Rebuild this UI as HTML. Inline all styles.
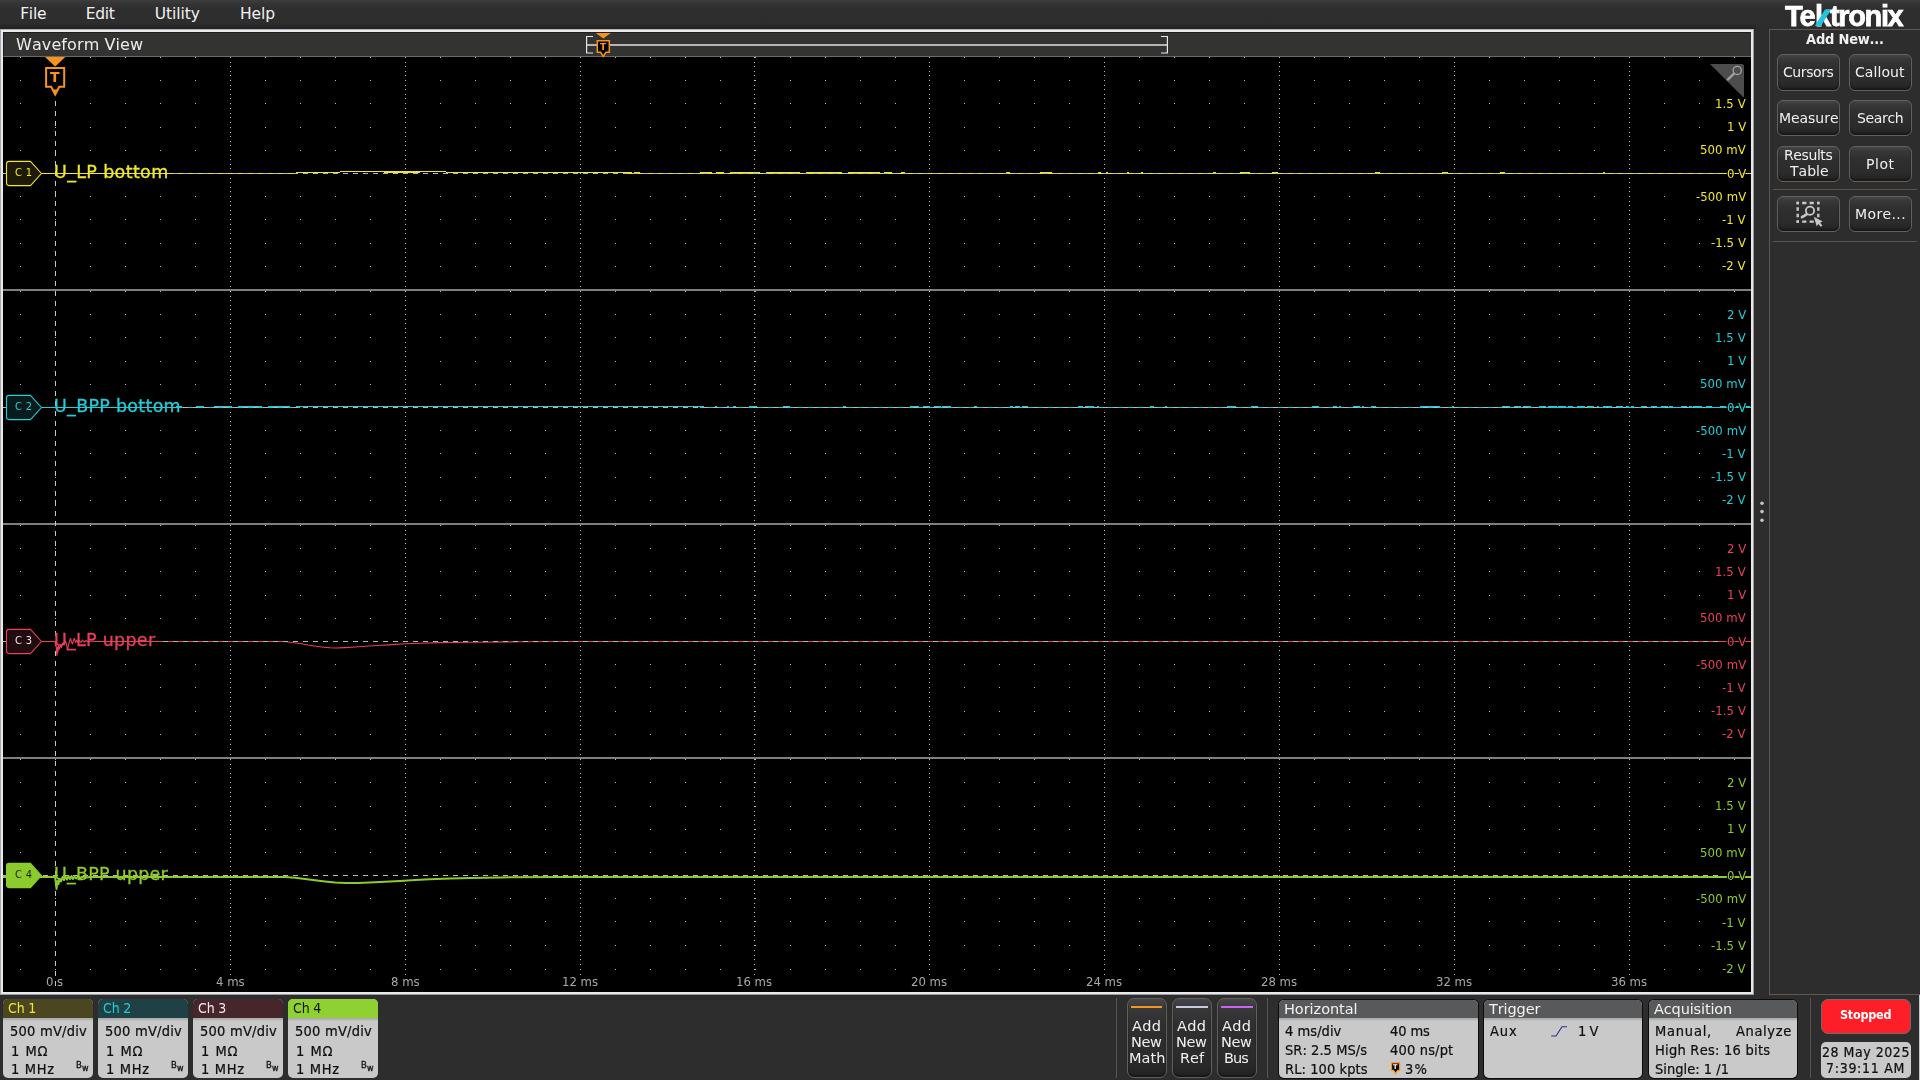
<!DOCTYPE html><html lang="en"><head><meta charset="utf-8"><title>Tektronix Waveform View</title><style>
*{box-sizing:border-box}
html,body{margin:0;padding:0}
body{width:1920px;height:1080px;overflow:hidden;background:#2d2d2d;position:relative;font-family:"DejaVu Sans Condensed","DejaVu Sans","Liberation Sans",sans-serif;color:#fff}
.t{position:absolute;white-space:nowrap;line-height:1;display:block;will-change:transform;font-kerning:none;font-variant-ligatures:none}
.lcd{will-change:auto}
.fc{font-family:"DejaVu Sans Condensed","DejaVu Sans","Liberation Sans",sans-serif;font-weight:400;font-stretch:condensed}
.fcb{font-family:"DejaVu Sans Condensed","DejaVu Sans","Liberation Sans",sans-serif;font-weight:700;font-stretch:condensed}
.fn{font-family:"DejaVu Sans","Liberation Sans",sans-serif;font-weight:400}
.fnb{font-family:"DejaVu Sans","Liberation Sans",sans-serif;font-weight:700}
.flb{font-family:"Liberation Sans","DejaVu Sans",sans-serif;font-weight:700}
.abs{position:absolute}
#menubar{left:0;top:0;width:1920px;height:29px;background:linear-gradient(#3d3d3d 0,#343434 4px,#2e2e2e 9px,#2d2d2d 29px)}
#mshadow{left:0;top:23px;width:1756px;height:6px;background:linear-gradient(rgba(0,0,0,0),rgba(0,0,0,.28))}
#wv{left:0;top:29px;width:1754px;height:966px;background:#e9e9ec;border-left:1px solid #a9a9ad;border-top:1px solid #b4b4b8;border-right:1px solid #9a9a9e;border-bottom:1px solid #9a9a9e}
#wvtitle{left:3px;top:32px;width:1748px;height:25px;background:#333331;border-top:1px solid #1e1e1e;border-left:1px solid #1e1e1e;border-bottom:1px solid #6a6a6a}
#grat{left:3px;top:57px;width:1748px;height:935px;background:#000}
#svg{left:0;top:0}
#rpanel{left:1769px;top:29px;width:160px;height:966px;border:1px solid #5f5751;background:#2d2d2d}
.btn{position:absolute;border:1px solid #665e58;border-radius:6px;background:linear-gradient(#444547 0,#38383a 12%,#2f2f30 35%,#2b2b2c 75%,#232324 100%);box-shadow:inset 0 -2px 2px rgba(0,0,0,.35)}
.sep{position:absolute;background:#5a534e}
.badge{position:absolute;border-radius:5px;overflow:hidden;background:#c9c9c9}
.badge .hd{position:absolute;left:0;top:0;right:0;height:19px}
.badge .sh{position:absolute;left:0;right:0;top:19px;height:3px;background:linear-gradient(#a9a9a9,#b6b6b6 60%,#c9c9c9)}
</style></head><body>
<div id="menubar" class="abs"></div><div id="mshadow" class="abs"></div>
<span class="t lcd fn" style="left:20.20px;top:6.90px;font-size:15.5px;color:#f2f2f2;letter-spacing:-0.241px;">File</span>
<span class="t lcd fn" style="left:85.80px;top:6.90px;font-size:15.5px;color:#f2f2f2;letter-spacing:-0.344px;">Edit</span>
<span class="t lcd fn" style="left:154.80px;top:6.90px;font-size:15.5px;color:#f2f2f2;letter-spacing:-0.068px;">Utility</span>
<span class="t lcd fn" style="left:240.00px;top:6.90px;font-size:15.5px;color:#f2f2f2;letter-spacing:-0.113px;">Help</span>
<div class="abs" id="logo" title="Tektronix" style="left:1780px;top:0;width:130px;height:29px"><span class="t flb" style="left:5.10px;top:1.70px;font-size:29px;color:#fff;letter-spacing:-3.282px;-webkit-text-stroke:0.75px #fff;">Te</span><span class="t flb" style="left:34.70px;top:1.70px;font-size:29px;color:#fff;-webkit-text-stroke:0.75px #fff;">k</span><span class="t flb" style="left:49.50px;top:1.70px;font-size:29px;color:#fff;letter-spacing:-1.369px;-webkit-text-stroke:0.75px #fff;">tronix</span>
<svg class="abs" style="left:30px;top:0" width="30" height="29" viewBox="1810 0 30 29"><polygon points="1814.8,25.9 1820.9,25.9 1831,9.6 1825,9.6" fill="#1fc3e3"/></svg>
</div>
<div id="wv" class="abs"></div><div id="wvtitle" class="abs"></div><div id="grat" class="abs"></div>
<span class="t fn" style="left:16.00px;top:37.00px;font-size:16px;color:#ececec;letter-spacing:0.102px;">Waveform View</span>
<svg id="svg" class="abs" width="1920" height="1080" viewBox="0 0 1920 1080">
<defs><clipPath id="gc"><rect x="3" y="57" width="1748" height="935"/></clipPath></defs>
<g clip-path="url(#gc)">
<g stroke="#bdbdbd" stroke-width="1" shape-rendering="crispEdges" stroke-dasharray="1 33.980">
<line x1="20.00" y1="57.5" x2="1751" y2="57.5"/>
<line x1="20.00" y1="80.5" x2="1751" y2="80.5"/>
<line x1="20.00" y1="103.5" x2="1751" y2="103.5"/>
<line x1="20.00" y1="127.5" x2="1751" y2="127.5"/>
<line x1="20.00" y1="150.5" x2="1751" y2="150.5"/>
<line x1="20.00" y1="196.5" x2="1751" y2="196.5"/>
<line x1="20.00" y1="219.5" x2="1751" y2="219.5"/>
<line x1="20.00" y1="243.5" x2="1751" y2="243.5"/>
<line x1="20.00" y1="266.5" x2="1751" y2="266.5"/>
<line x1="20.00" y1="291.5" x2="1751" y2="291.5"/>
<line x1="20.00" y1="314.5" x2="1751" y2="314.5"/>
<line x1="20.00" y1="337.5" x2="1751" y2="337.5"/>
<line x1="20.00" y1="361.5" x2="1751" y2="361.5"/>
<line x1="20.00" y1="384.5" x2="1751" y2="384.5"/>
<line x1="20.00" y1="430.5" x2="1751" y2="430.5"/>
<line x1="20.00" y1="453.5" x2="1751" y2="453.5"/>
<line x1="20.00" y1="477.5" x2="1751" y2="477.5"/>
<line x1="20.00" y1="500.5" x2="1751" y2="500.5"/>
<line x1="20.00" y1="525.5" x2="1751" y2="525.5"/>
<line x1="20.00" y1="548.5" x2="1751" y2="548.5"/>
<line x1="20.00" y1="571.5" x2="1751" y2="571.5"/>
<line x1="20.00" y1="595.5" x2="1751" y2="595.5"/>
<line x1="20.00" y1="618.5" x2="1751" y2="618.5"/>
<line x1="20.00" y1="664.5" x2="1751" y2="664.5"/>
<line x1="20.00" y1="687.5" x2="1751" y2="687.5"/>
<line x1="20.00" y1="711.5" x2="1751" y2="711.5"/>
<line x1="20.00" y1="734.5" x2="1751" y2="734.5"/>
<line x1="20.00" y1="759.5" x2="1751" y2="759.5"/>
<line x1="20.00" y1="782.5" x2="1751" y2="782.5"/>
<line x1="20.00" y1="806.5" x2="1751" y2="806.5"/>
<line x1="20.00" y1="829.5" x2="1751" y2="829.5"/>
<line x1="20.00" y1="852.5" x2="1751" y2="852.5"/>
<line x1="20.00" y1="898.5" x2="1751" y2="898.5"/>
<line x1="20.00" y1="921.5" x2="1751" y2="921.5"/>
<line x1="20.00" y1="945.5" x2="1751" y2="945.5"/>
<line x1="20.00" y1="969.5" x2="1751" y2="969.5"/>
</g>
<defs><path id="vd" d="M.5,57v1M.5,62v1M.5,66v1M.5,71v1M.5,75v1M.5,80v1M.5,85v1M.5,89v1M.5,94v1M.5,98v1M.5,103v1M.5,108v1M.5,113v1M.5,117v1M.5,122v1M.5,127v1M.5,132v1M.5,136v1M.5,141v1M.5,145v1M.5,150v1M.5,155v1M.5,159v1M.5,164v1M.5,168v1M.5,173v1M.5,178v1M.5,182v1M.5,187v1M.5,191v1M.5,196v1M.5,201v1M.5,205v1M.5,210v1M.5,214v1M.5,219v1M.5,224v1M.5,229v1M.5,233v1M.5,238v1M.5,243v1M.5,248v1M.5,252v1M.5,257v1M.5,261v1M.5,266v1M.5,271v1M.5,276v1M.5,281v1M.5,286v1M.5,291v1M.5,296v1M.5,300v1M.5,305v1M.5,309v1M.5,314v1M.5,319v1M.5,323v1M.5,328v1M.5,332v1M.5,337v1M.5,342v1M.5,347v1M.5,351v1M.5,356v1M.5,361v1M.5,366v1M.5,370v1M.5,375v1M.5,379v1M.5,384v1M.5,389v1M.5,393v1M.5,398v1M.5,402v1M.5,407v1M.5,412v1M.5,416v1M.5,421v1M.5,425v1M.5,430v1M.5,435v1M.5,439v1M.5,444v1M.5,448v1M.5,453v1M.5,458v1M.5,463v1M.5,467v1M.5,472v1M.5,477v1M.5,482v1M.5,486v1M.5,491v1M.5,495v1M.5,500v1M.5,505v1M.5,510v1M.5,515v1M.5,520v1M.5,525v1M.5,530v1M.5,534v1M.5,539v1M.5,543v1M.5,548v1M.5,553v1M.5,557v1M.5,562v1M.5,566v1M.5,571v1M.5,576v1M.5,581v1M.5,585v1M.5,590v1M.5,595v1M.5,600v1M.5,604v1M.5,609v1M.5,613v1M.5,618v1M.5,623v1M.5,627v1M.5,632v1M.5,636v1M.5,641v1M.5,646v1M.5,650v1M.5,655v1M.5,659v1M.5,664v1M.5,669v1M.5,673v1M.5,678v1M.5,682v1M.5,687v1M.5,692v1M.5,697v1M.5,701v1M.5,706v1M.5,711v1M.5,716v1M.5,720v1M.5,725v1M.5,729v1M.5,734v1M.5,739v1M.5,744v1M.5,749v1M.5,754v1M.5,759v1M.5,764v1M.5,768v1M.5,773v1M.5,777v1M.5,782v1M.5,787v1M.5,792v1M.5,796v1M.5,801v1M.5,806v1M.5,811v1M.5,815v1M.5,820v1M.5,824v1M.5,829v1M.5,834v1M.5,838v1M.5,843v1M.5,847v1M.5,852v1M.5,857v1M.5,861v1M.5,866v1M.5,870v1M.5,875v1M.5,880v1M.5,884v1M.5,889v1M.5,893v1M.5,898v1M.5,903v1M.5,907v1M.5,912v1M.5,916v1M.5,921v1M.5,926v1M.5,931v1M.5,935v1M.5,940v1M.5,945v1M.5,950v1M.5,955v1M.5,959v1M.5,964v1M.5,969v1M.5,974v1" stroke="#bdbdbd" stroke-width="1" shape-rendering="crispEdges" fill="none"/></defs>
<use href="#vd" x="230"/>
<use href="#vd" x="405"/>
<use href="#vd" x="580"/>
<use href="#vd" x="754"/>
<use href="#vd" x="929"/>
<use href="#vd" x="1104"/>
<use href="#vd" x="1279"/>
<use href="#vd" x="1454"/>
<use href="#vd" x="1629"/>
<rect x="3" y="289" width="1748" height="2" fill="#7f7f7f"/>
<rect x="3" y="523" width="1748" height="2" fill="#7f7f7f"/>
<rect x="3" y="757" width="1748" height="2" fill="#7f7f7f"/>
<line x1="55.5" y1="101" x2="55.5" y2="991" stroke="#c8c8c8" stroke-width="1" stroke-dasharray="5 5" shape-rendering="crispEdges"/>
</g>
<g clip-path="url(#gc)" fill="none" shape-rendering="crispEdges">
<line x1="3" y1="173.5" x2="298" y2="173.5" stroke="#f0e62e" stroke-width="1"/><line x1="296" y1="172.5" x2="340" y2="172.5" stroke="#f0e62e" stroke-width="1"/><line x1="340" y1="171.5" x2="446" y2="171.5" stroke="#f0e62e" stroke-width="1"/><line x1="384" y1="172.5" x2="420" y2="172.5" stroke="#f0e62e" stroke-width="1"/><line x1="446" y1="172.5" x2="632" y2="172.5" stroke="#f0e62e" stroke-width="1"/><line x1="628" y1="173.5" x2="1751" y2="173.5" stroke="#f0e62e" stroke-width="1"/><line x1="300" y1="172.5" x2="308" y2="172.5" stroke="#f0e62e" stroke-width="1"/><line x1="318" y1="172.5" x2="322" y2="172.5" stroke="#f0e62e" stroke-width="1"/><line x1="452" y1="172.5" x2="462" y2="172.5" stroke="#f0e62e" stroke-width="1"/><line x1="466" y1="172.5" x2="470" y2="172.5" stroke="#f0e62e" stroke-width="1"/><line x1="476" y1="172.5" x2="486" y2="172.5" stroke="#f0e62e" stroke-width="1"/><line x1="634" y1="172.5" x2="640" y2="172.5" stroke="#f0e62e" stroke-width="1"/><line x1="700" y1="172.5" x2="712" y2="172.5" stroke="#f0e62e" stroke-width="1"/><line x1="716" y1="172.5" x2="724" y2="172.5" stroke="#f0e62e" stroke-width="1"/><line x1="730" y1="172.5" x2="760" y2="172.5" stroke="#f0e62e" stroke-width="1"/><line x1="766" y1="172.5" x2="800" y2="172.5" stroke="#f0e62e" stroke-width="1"/><line x1="806" y1="172.5" x2="842" y2="172.5" stroke="#f0e62e" stroke-width="1"/><line x1="848" y1="172.5" x2="880" y2="172.5" stroke="#f0e62e" stroke-width="1"/><line x1="884" y1="172.5" x2="892" y2="172.5" stroke="#f0e62e" stroke-width="1"/><line x1="1040" y1="172.5" x2="1052" y2="172.5" stroke="#f0e62e" stroke-width="1"/><line x1="1240" y1="172.5" x2="1250" y2="172.5" stroke="#f0e62e" stroke-width="1"/><line x1="901" y1="172.5" x2="905" y2="172.5" stroke="#f0e62e" stroke-width="1"/><line x1="1006" y1="172.5" x2="1010" y2="172.5" stroke="#f0e62e" stroke-width="1"/><line x1="1047" y1="172.5" x2="1051" y2="172.5" stroke="#f0e62e" stroke-width="1"/><line x1="1098" y1="172.5" x2="1101" y2="172.5" stroke="#f0e62e" stroke-width="1"/><line x1="1106" y1="172.5" x2="1108" y2="172.5" stroke="#f0e62e" stroke-width="1"/><line x1="1127" y1="172.5" x2="1129" y2="172.5" stroke="#f0e62e" stroke-width="1"/><line x1="1141" y1="172.5" x2="1143" y2="172.5" stroke="#f0e62e" stroke-width="1"/><line x1="1213" y1="172.5" x2="1216" y2="172.5" stroke="#f0e62e" stroke-width="1"/><line x1="1272" y1="172.5" x2="1278" y2="172.5" stroke="#f0e62e" stroke-width="1"/><line x1="1375" y1="172.5" x2="1380" y2="172.5" stroke="#f0e62e" stroke-width="1"/><line x1="1442" y1="172.5" x2="1448" y2="172.5" stroke="#f0e62e" stroke-width="1"/><line x1="1500" y1="172.5" x2="1505" y2="172.5" stroke="#f0e62e" stroke-width="1"/><line x1="1603" y1="172.5" x2="1605" y2="172.5" stroke="#f0e62e" stroke-width="1"/>
<line x1="3" y1="407.5" x2="300" y2="407.5" stroke="#22cdd6" stroke-width="1"/><line x1="296" y1="406.5" x2="704" y2="406.5" stroke="#22cdd6" stroke-width="1"/><line x1="700" y1="407.5" x2="1751" y2="407.5" stroke="#22cdd6" stroke-width="1"/><line x1="715" y1="406.5" x2="717" y2="406.5" stroke="#22cdd6" stroke-width="1"/><line x1="727" y1="406.5" x2="729" y2="406.5" stroke="#22cdd6" stroke-width="1"/><line x1="733" y1="406.5" x2="736" y2="406.5" stroke="#22cdd6" stroke-width="1"/><line x1="749" y1="406.5" x2="757" y2="406.5" stroke="#22cdd6" stroke-width="1"/><line x1="783" y1="406.5" x2="790" y2="406.5" stroke="#22cdd6" stroke-width="1"/><line x1="843" y1="406.5" x2="846" y2="406.5" stroke="#22cdd6" stroke-width="1"/><line x1="910" y1="406.5" x2="919" y2="406.5" stroke="#22cdd6" stroke-width="1"/><line x1="923" y1="406.5" x2="930" y2="406.5" stroke="#22cdd6" stroke-width="1"/><line x1="934" y1="406.5" x2="941" y2="406.5" stroke="#22cdd6" stroke-width="1"/><line x1="942" y1="406.5" x2="951" y2="406.5" stroke="#22cdd6" stroke-width="1"/><line x1="974" y1="406.5" x2="977" y2="406.5" stroke="#22cdd6" stroke-width="1"/><line x1="1010" y1="406.5" x2="1013" y2="406.5" stroke="#22cdd6" stroke-width="1"/><line x1="1015" y1="406.5" x2="1020" y2="406.5" stroke="#22cdd6" stroke-width="1"/><line x1="1022" y1="406.5" x2="1028" y2="406.5" stroke="#22cdd6" stroke-width="1"/><line x1="1078" y1="406.5" x2="1083" y2="406.5" stroke="#22cdd6" stroke-width="1"/><line x1="1085" y1="406.5" x2="1094" y2="406.5" stroke="#22cdd6" stroke-width="1"/><line x1="1097" y1="406.5" x2="1099" y2="406.5" stroke="#22cdd6" stroke-width="1"/><line x1="1150" y1="406.5" x2="1154" y2="406.5" stroke="#22cdd6" stroke-width="1"/><line x1="1165" y1="406.5" x2="1167" y2="406.5" stroke="#22cdd6" stroke-width="1"/><line x1="1227" y1="406.5" x2="1236" y2="406.5" stroke="#22cdd6" stroke-width="1"/><line x1="1251" y1="406.5" x2="1258" y2="406.5" stroke="#22cdd6" stroke-width="1"/><line x1="1312" y1="406.5" x2="1319" y2="406.5" stroke="#22cdd6" stroke-width="1"/><line x1="1333" y1="406.5" x2="1337" y2="406.5" stroke="#22cdd6" stroke-width="1"/><line x1="1339" y1="406.5" x2="1341" y2="406.5" stroke="#22cdd6" stroke-width="1"/><line x1="1353" y1="406.5" x2="1360" y2="406.5" stroke="#22cdd6" stroke-width="1"/><line x1="1362" y1="406.5" x2="1364" y2="406.5" stroke="#22cdd6" stroke-width="1"/><line x1="1371" y1="406.5" x2="1376" y2="406.5" stroke="#22cdd6" stroke-width="1"/><line x1="1428" y1="406.5" x2="1432" y2="406.5" stroke="#22cdd6" stroke-width="1"/><line x1="1452" y1="406.5" x2="1454" y2="406.5" stroke="#22cdd6" stroke-width="1"/><line x1="1502" y1="406.5" x2="1510" y2="406.5" stroke="#22cdd6" stroke-width="1"/><line x1="1514" y1="406.5" x2="1521" y2="406.5" stroke="#22cdd6" stroke-width="1"/><line x1="1523" y1="406.5" x2="1531" y2="406.5" stroke="#22cdd6" stroke-width="1"/><line x1="1539" y1="406.5" x2="1546" y2="406.5" stroke="#22cdd6" stroke-width="1"/><line x1="1548" y1="406.5" x2="1557" y2="406.5" stroke="#22cdd6" stroke-width="1"/><line x1="1558" y1="406.5" x2="1566" y2="406.5" stroke="#22cdd6" stroke-width="1"/><line x1="1568" y1="406.5" x2="1573" y2="406.5" stroke="#22cdd6" stroke-width="1"/><line x1="1577" y1="406.5" x2="1585" y2="406.5" stroke="#22cdd6" stroke-width="1"/><line x1="1587" y1="406.5" x2="1594" y2="406.5" stroke="#22cdd6" stroke-width="1"/><line x1="1597" y1="406.5" x2="1599" y2="406.5" stroke="#22cdd6" stroke-width="1"/><line x1="1603" y1="406.5" x2="1612" y2="406.5" stroke="#22cdd6" stroke-width="1"/><line x1="1616" y1="406.5" x2="1623" y2="406.5" stroke="#22cdd6" stroke-width="1"/><line x1="1626" y1="406.5" x2="1629" y2="406.5" stroke="#22cdd6" stroke-width="1"/><line x1="1631" y1="406.5" x2="1634" y2="406.5" stroke="#22cdd6" stroke-width="1"/><line x1="1641" y1="406.5" x2="1647" y2="406.5" stroke="#22cdd6" stroke-width="1"/><line x1="1651" y1="406.5" x2="1657" y2="406.5" stroke="#22cdd6" stroke-width="1"/><line x1="1661" y1="406.5" x2="1668" y2="406.5" stroke="#22cdd6" stroke-width="1"/><line x1="1669" y1="406.5" x2="1673" y2="406.5" stroke="#22cdd6" stroke-width="1"/><line x1="1681" y1="406.5" x2="1687" y2="406.5" stroke="#22cdd6" stroke-width="1"/><line x1="1689" y1="406.5" x2="1692" y2="406.5" stroke="#22cdd6" stroke-width="1"/><line x1="1693" y1="406.5" x2="1702" y2="406.5" stroke="#22cdd6" stroke-width="1"/><line x1="1706" y1="406.5" x2="1712" y2="406.5" stroke="#22cdd6" stroke-width="1"/><line x1="1720" y1="406.5" x2="1726" y2="406.5" stroke="#22cdd6" stroke-width="1"/><line x1="1728" y1="406.5" x2="1734" y2="406.5" stroke="#22cdd6" stroke-width="1"/><line x1="1736" y1="406.5" x2="1742" y2="406.5" stroke="#22cdd6" stroke-width="1"/><line x1="1744" y1="406.5" x2="1750" y2="406.5" stroke="#22cdd6" stroke-width="1"/><line x1="176" y1="406.5" x2="182" y2="406.5" stroke="#22cdd6" stroke-width="1"/><line x1="196" y1="406.5" x2="204" y2="406.5" stroke="#22cdd6" stroke-width="1"/><line x1="214" y1="406.5" x2="232" y2="406.5" stroke="#22cdd6" stroke-width="1"/><line x1="238" y1="406.5" x2="262" y2="406.5" stroke="#22cdd6" stroke-width="1"/><line x1="268" y1="406.5" x2="290" y2="406.5" stroke="#22cdd6" stroke-width="1"/><line x1="1420" y1="406.5" x2="1440" y2="406.5" stroke="#22cdd6" stroke-width="1"/>
</g>
<g clip-path="url(#gc)" fill="none" stroke-linejoin="round">
<polyline points="3.0,641.5 55.0,641.5 55.5,646.0 56.0,641.0 56.5,652.0 57.0,655.5 57.5,647.0 58.0,652.0 58.5,646.0 59.5,649.0 60.5,645.0 61.5,647.5 62.5,643.0 64.0,645.0 65.5,641.0 66.5,644.5 67.5,650.0 68.5,645.0 69.5,641.0 70.5,638.5 71.5,642.0 72.5,644.0 73.5,640.0 74.5,638.5 75.5,642.5 77.0,640.0 78.0,642.5 79.5,640.5 81.0,642.5 82.5,640.0 84.0,642.0 86.0,640.5 88.0,642.0 91.0,641.0 95.0,641.5 285.0,641.5 292.0,642.5 300.0,643.5 308.0,645.0 316.0,646.2 324.0,647.2 330.0,647.8 336.0,648.0 345.0,647.6 355.0,647.0 365.0,646.3 378.0,645.5 392.0,644.6 405.0,643.8 420.0,643.2 440.0,642.6 470.0,642.2 520.0,641.8 560.0,641.5 1751.0,641.5" stroke="#e8405a" stroke-width="1.1"/>
<polyline points="3.0,877.0 55.0,877.0 55.5,880.0 56.5,889.0 57.5,881.0 58.5,884.0 59.5,879.0 61.0,881.5 62.5,877.0 64.0,880.0 65.5,876.5 67.0,879.5 68.5,876.0 70.0,879.0 71.5,876.0 73.0,879.0 74.5,876.5 76.0,878.5 78.0,876.3 80.0,878.0 83.0,876.5 86.0,877.5 90.0,877.0 100.0,877.0 285.0,877.0 295.0,877.8 305.0,879.0 315.0,880.2 325.0,881.4 335.0,882.4 345.0,882.9 358.0,882.9 370.0,882.5 385.0,881.8 400.0,880.9 415.0,880.0 430.0,879.2 450.0,878.4 470.0,877.9 500.0,877.4 560.0,877.1 620.0,877.0 1751.0,877.0" stroke="#8ccb2c" stroke-width="2"/>
</g>
<g clip-path="url(#gc)" shape-rendering="crispEdges" stroke="#b9b9b9" stroke-width="1" stroke-dasharray="5 5">
<line x1="173" y1="173.5" x2="1718" y2="173.5"/>
<line x1="183" y1="407.5" x2="1718" y2="407.5"/>
<line x1="163" y1="641.5" x2="1718" y2="641.5"/>
<line x1="43" y1="875.5" x2="1718" y2="875.5"/>
</g>
<g clip-path="url(#gc)" shape-rendering="crispEdges"><line x1="1545" y1="407.5" x2="1552" y2="407.5" stroke="#22cdd6" stroke-width="1"/><line x1="1553" y1="407.5" x2="1559" y2="407.5" stroke="#22cdd6" stroke-width="1"/><line x1="1561" y1="407.5" x2="1571" y2="407.5" stroke="#22cdd6" stroke-width="1"/><line x1="1575" y1="407.5" x2="1585" y2="407.5" stroke="#22cdd6" stroke-width="1"/><line x1="1598" y1="407.5" x2="1606" y2="407.5" stroke="#22cdd6" stroke-width="1"/><line x1="1618" y1="407.5" x2="1623" y2="407.5" stroke="#22cdd6" stroke-width="1"/><line x1="1626" y1="407.5" x2="1635" y2="407.5" stroke="#22cdd6" stroke-width="1"/><line x1="1655" y1="407.5" x2="1665" y2="407.5" stroke="#22cdd6" stroke-width="1"/><line x1="1668" y1="407.5" x2="1678" y2="407.5" stroke="#22cdd6" stroke-width="1"/><line x1="1694" y1="407.5" x2="1702" y2="407.5" stroke="#22cdd6" stroke-width="1"/><line x1="1705" y1="407.5" x2="1711" y2="407.5" stroke="#22cdd6" stroke-width="1"/><line x1="1712" y1="407.5" x2="1720" y2="407.5" stroke="#22cdd6" stroke-width="1"/></g>
<rect x="3" y="173.0" width="4" height="1" fill="#b0b0b0"/>
<rect x="3" y="407.0" width="4" height="1" fill="#b0b0b0"/>
<rect x="3" y="641.0" width="4" height="1" fill="#b0b0b0"/>
<rect x="3" y="875.0" width="4" height="1" fill="#b0b0b0"/>
<path d="M9,161.4 H30.5 L41.5,173.5 L30.5,185.6 H9 Q6.5,185.6 6.5,183.1 V163.9 Q6.5,161.4 9,161.4 Z" fill="#1d1b08" stroke="#f0e62e" stroke-width="1.1" stroke-linejoin="round"/>
<path d="M9,395.4 H30.5 L41.5,407.5 L30.5,419.6 H9 Q6.5,419.6 6.5,417.1 V397.9 Q6.5,395.4 9,395.4 Z" fill="#081c1e" stroke="#22cdd6" stroke-width="1.1" stroke-linejoin="round"/>
<path d="M9,629.4 H30.5 L41.5,641.5 L30.5,653.6 H9 Q6.5,653.6 6.5,651.1 V631.9 Q6.5,629.4 9,629.4 Z" fill="#210c11" stroke="#e8405a" stroke-width="1.1" stroke-linejoin="round"/>
<path d="M9,863.4 H30.5 L41.5,875.5 L30.5,887.6 H9 Q6.5,887.6 6.5,885.1 V865.9 Q6.5,863.4 9,863.4 Z" fill="#8ccb2c" stroke="#8ccb2c" stroke-width="1.1" stroke-linejoin="round"/>
<polygon points="45,57 65.3,57 55.2,66.4" fill="#f7931e"/>
<path d="M46.1,68.1 H64.2 V86.8 H59.2 L55.2,94.5 L51.2,86.8 H46.1 Z" fill="#000" stroke="#f7931e" stroke-width="2"/><polygon points="52.6,89.5 57.8,89.5 55.2,94.5" fill="#f7931e"/>
<path d="M1710,64 H1742 Q1744,64 1744,66 V98 Z" fill="#4d4d4d"/>
<circle cx="1737.2" cy="70.4" r="4.1" fill="none" stroke="#a2a2a2" stroke-width="1.3"/><line x1="1734" y1="73.6" x2="1727.8" y2="79.6" stroke="#a2a2a2" stroke-width="2.2" stroke-linecap="round"/>
<line x1="587" y1="45" x2="1167" y2="45" stroke="#b4b4b4" stroke-width="2"/>
<path d="M593,36.5 H586.6 V53 H593 M1161,36.5 H1167.4 V53 H1161" fill="none" stroke="#e6e6e6" stroke-width="1.2"/>
<polygon points="595.8,33 610.8,33 603.3,38.4" fill="#f7931e"/>
<path d="M597.3,40.8 H609.3 V52.3 H606 L603.3,56.3 L600.6,52.3 H597.3 Z" fill="#000" stroke="#f7931e" stroke-width="1.5"/>
<circle cx="1762" cy="503.2" r="1.8" fill="#c4c4c4"/>
<circle cx="1762" cy="511.6" r="1.8" fill="#c4c4c4"/>
<circle cx="1762" cy="520.2" r="1.8" fill="#c4c4c4"/>
</svg>
<span class="t fnb" style="left:49.90px;top:70.40px;font-size:14px;color:#f7931e;">T</span>
<span class="t fnb" style="left:599.70px;top:42.70px;font-size:9px;color:#f7931e;">T</span>
<span class="t fc" style="left:14.50px;top:167.40px;font-size:11px;color:#f0e62e;letter-spacing:0.369px;">C 1</span>
<span class="t fn" style="left:53.90px;top:163.80px;font-size:17.5px;color:#f0e62e;letter-spacing:0.347px;-webkit-text-stroke:0.3px #f0e62e;">U_LP bottom</span>
<span class="t fc" style="left:14.50px;top:401.40px;font-size:11px;color:#22cdd6;letter-spacing:0.369px;">C 2</span>
<span class="t fn" style="left:53.90px;top:397.80px;font-size:17.5px;color:#22cdd6;letter-spacing:0.286px;-webkit-text-stroke:0.3px #22cdd6;">U_BPP bottom</span>
<span class="t fc" style="left:14.50px;top:635.40px;font-size:11px;color:#f6e2e6;letter-spacing:0.369px;">C 3</span>
<span class="t fn" style="left:53.90px;top:631.80px;font-size:17.5px;color:#e8405a;letter-spacing:0.267px;-webkit-text-stroke:0.3px #e8405a;">U_LP upper</span>
<span class="t fc" style="left:14.50px;top:869.40px;font-size:11px;color:#17260a;letter-spacing:0.369px;">C 4</span>
<span class="t fn" style="left:53.90px;top:865.80px;font-size:17.5px;color:#8ccb2c;letter-spacing:0.228px;-webkit-text-stroke:0.3px #8ccb2c;">U_BPP upper</span>
<span class="t fc" style="left:1715.19px;top:97.00px;font-size:13px;color:#f0e62e;letter-spacing:0.080px;background:#000;padding:0 1px 0 3px;margin-left:-3px;">1.5 V</span>
<span class="t fc" style="left:1726.50px;top:120.00px;font-size:13px;color:#f0e62e;letter-spacing:0.080px;background:#000;padding:0 1px 0 3px;margin-left:-3px;">1 V</span>
<span class="t fc" style="left:1699.96px;top:143.00px;font-size:13px;color:#f0e62e;letter-spacing:0.080px;background:#000;padding:0 1px 0 3px;margin-left:-3px;">500 mV</span>
<span class="t fc" style="left:1726.50px;top:167.00px;font-size:13px;color:#f0e62e;letter-spacing:0.080px;text-shadow:-1px 0 0 #000,1px 0 0 #000;">0 V</span>
<span class="t fc" style="left:1695.66px;top:190.00px;font-size:13px;color:#f0e62e;letter-spacing:0.080px;background:#000;padding:0 1px 0 3px;margin-left:-3px;">-500 mV</span>
<span class="t fc" style="left:1722.19px;top:213.00px;font-size:13px;color:#f0e62e;letter-spacing:0.080px;background:#000;padding:0 1px 0 3px;margin-left:-3px;">-1 V</span>
<span class="t fc" style="left:1710.88px;top:236.00px;font-size:13px;color:#f0e62e;letter-spacing:0.080px;background:#000;padding:0 1px 0 3px;margin-left:-3px;">-1.5 V</span>
<span class="t fc" style="left:1722.19px;top:259.00px;font-size:13px;color:#f0e62e;letter-spacing:0.080px;background:#000;padding:0 1px 0 3px;margin-left:-3px;">-2 V</span>
<span class="t fc" style="left:1726.50px;top:308.00px;font-size:13px;color:#22cdd6;letter-spacing:0.080px;background:#000;padding:0 1px 0 3px;margin-left:-3px;">2 V</span>
<span class="t fc" style="left:1715.19px;top:331.00px;font-size:13px;color:#22cdd6;letter-spacing:0.080px;background:#000;padding:0 1px 0 3px;margin-left:-3px;">1.5 V</span>
<span class="t fc" style="left:1726.50px;top:354.00px;font-size:13px;color:#22cdd6;letter-spacing:0.080px;background:#000;padding:0 1px 0 3px;margin-left:-3px;">1 V</span>
<span class="t fc" style="left:1699.96px;top:377.00px;font-size:13px;color:#22cdd6;letter-spacing:0.080px;background:#000;padding:0 1px 0 3px;margin-left:-3px;">500 mV</span>
<span class="t fc" style="left:1726.50px;top:401.00px;font-size:13px;color:#22cdd6;letter-spacing:0.080px;text-shadow:-1px 0 0 #000,1px 0 0 #000;">0 V</span>
<span class="t fc" style="left:1695.66px;top:424.00px;font-size:13px;color:#22cdd6;letter-spacing:0.080px;background:#000;padding:0 1px 0 3px;margin-left:-3px;">-500 mV</span>
<span class="t fc" style="left:1722.19px;top:447.00px;font-size:13px;color:#22cdd6;letter-spacing:0.080px;background:#000;padding:0 1px 0 3px;margin-left:-3px;">-1 V</span>
<span class="t fc" style="left:1710.88px;top:470.00px;font-size:13px;color:#22cdd6;letter-spacing:0.080px;background:#000;padding:0 1px 0 3px;margin-left:-3px;">-1.5 V</span>
<span class="t fc" style="left:1722.19px;top:493.00px;font-size:13px;color:#22cdd6;letter-spacing:0.080px;background:#000;padding:0 1px 0 3px;margin-left:-3px;">-2 V</span>
<span class="t fc" style="left:1726.50px;top:542.00px;font-size:13px;color:#e8405a;letter-spacing:0.080px;background:#000;padding:0 1px 0 3px;margin-left:-3px;">2 V</span>
<span class="t fc" style="left:1715.19px;top:565.00px;font-size:13px;color:#e8405a;letter-spacing:0.080px;background:#000;padding:0 1px 0 3px;margin-left:-3px;">1.5 V</span>
<span class="t fc" style="left:1726.50px;top:588.00px;font-size:13px;color:#e8405a;letter-spacing:0.080px;background:#000;padding:0 1px 0 3px;margin-left:-3px;">1 V</span>
<span class="t fc" style="left:1699.96px;top:611.00px;font-size:13px;color:#e8405a;letter-spacing:0.080px;background:#000;padding:0 1px 0 3px;margin-left:-3px;">500 mV</span>
<span class="t fc" style="left:1726.50px;top:635.00px;font-size:13px;color:#e8405a;letter-spacing:0.080px;text-shadow:-1px 0 0 #000,1px 0 0 #000;">0 V</span>
<span class="t fc" style="left:1695.66px;top:658.00px;font-size:13px;color:#e8405a;letter-spacing:0.080px;background:#000;padding:0 1px 0 3px;margin-left:-3px;">-500 mV</span>
<span class="t fc" style="left:1722.19px;top:681.00px;font-size:13px;color:#e8405a;letter-spacing:0.080px;background:#000;padding:0 1px 0 3px;margin-left:-3px;">-1 V</span>
<span class="t fc" style="left:1710.88px;top:704.00px;font-size:13px;color:#e8405a;letter-spacing:0.080px;background:#000;padding:0 1px 0 3px;margin-left:-3px;">-1.5 V</span>
<span class="t fc" style="left:1722.19px;top:727.00px;font-size:13px;color:#e8405a;letter-spacing:0.080px;background:#000;padding:0 1px 0 3px;margin-left:-3px;">-2 V</span>
<span class="t fc" style="left:1726.50px;top:776.00px;font-size:13px;color:#8ccb2c;letter-spacing:0.080px;background:#000;padding:0 1px 0 3px;margin-left:-3px;">2 V</span>
<span class="t fc" style="left:1715.19px;top:799.00px;font-size:13px;color:#8ccb2c;letter-spacing:0.080px;background:#000;padding:0 1px 0 3px;margin-left:-3px;">1.5 V</span>
<span class="t fc" style="left:1726.50px;top:822.00px;font-size:13px;color:#8ccb2c;letter-spacing:0.080px;background:#000;padding:0 1px 0 3px;margin-left:-3px;">1 V</span>
<span class="t fc" style="left:1699.96px;top:846.00px;font-size:13px;color:#8ccb2c;letter-spacing:0.080px;background:#000;padding:0 1px 0 3px;margin-left:-3px;">500 mV</span>
<span class="t fc" style="left:1726.50px;top:869.00px;font-size:13px;color:#8ccb2c;letter-spacing:0.080px;text-shadow:-1px 0 0 #000,1px 0 0 #000;">0 V</span>
<span class="t fc" style="left:1695.66px;top:892.00px;font-size:13px;color:#8ccb2c;letter-spacing:0.080px;background:#000;padding:0 1px 0 3px;margin-left:-3px;">-500 mV</span>
<span class="t fc" style="left:1722.19px;top:916.00px;font-size:13px;color:#8ccb2c;letter-spacing:0.080px;background:#000;padding:0 1px 0 3px;margin-left:-3px;">-1 V</span>
<span class="t fc" style="left:1710.88px;top:939.00px;font-size:13px;color:#8ccb2c;letter-spacing:0.080px;background:#000;padding:0 1px 0 3px;margin-left:-3px;">-1.5 V</span>
<span class="t fc" style="left:1722.19px;top:962.00px;font-size:13px;color:#8ccb2c;letter-spacing:0.080px;background:#000;padding:0 1px 0 3px;margin-left:-3px;">-2 V</span>
<span class="t fc" style="left:46.20px;top:974.80px;font-size:13px;color:#a8a8a8;letter-spacing:-0.079px;">0 s</span>
<span class="t fc" style="left:216.40px;top:974.80px;font-size:13px;color:#a8a8a8;letter-spacing:-0.011px;background:#000;">4 ms</span>
<span class="t fc" style="left:391.40px;top:974.80px;font-size:13px;color:#a8a8a8;letter-spacing:-0.011px;background:#000;">8 ms</span>
<span class="t fc" style="left:561.60px;top:974.80px;font-size:13px;color:#a8a8a8;letter-spacing:-0.019px;background:#000;">12 ms</span>
<span class="t fc" style="left:735.60px;top:974.80px;font-size:13px;color:#a8a8a8;letter-spacing:-0.019px;background:#000;">16 ms</span>
<span class="t fc" style="left:910.60px;top:974.80px;font-size:13px;color:#a8a8a8;letter-spacing:-0.019px;background:#000;">20 ms</span>
<span class="t fc" style="left:1085.60px;top:974.80px;font-size:13px;color:#a8a8a8;letter-spacing:-0.019px;background:#000;">24 ms</span>
<span class="t fc" style="left:1260.60px;top:974.80px;font-size:13px;color:#a8a8a8;letter-spacing:-0.019px;background:#000;">28 ms</span>
<span class="t fc" style="left:1435.60px;top:974.80px;font-size:13px;color:#a8a8a8;letter-spacing:-0.019px;background:#000;">32 ms</span>
<span class="t fc" style="left:1610.60px;top:974.80px;font-size:13px;color:#a8a8a8;letter-spacing:-0.019px;background:#000;">36 ms</span>
<div id="rpanel" class="abs"></div>
<span class="t fcb" style="left:1805.70px;top:31.90px;font-size:14.5px;color:#f0f0f0;letter-spacing:-0.218px;">Add New...</span>
<div class="btn" style="left:1777.0px;top:54.0px;width:62.5px;height:36.5px;"></div>
<div class="btn" style="left:1848.8px;top:54.0px;width:63.0px;height:36.5px;"></div>
<div class="btn" style="left:1777.0px;top:99.6px;width:62.5px;height:36.6px;"></div>
<div class="btn" style="left:1848.8px;top:99.6px;width:63.0px;height:36.6px;"></div>
<div class="btn" style="left:1777.0px;top:145.8px;width:62.5px;height:36.7px;"></div>
<div class="btn" style="left:1848.8px;top:145.8px;width:63.0px;height:36.7px;"></div>
<div class="btn" style="left:1777.0px;top:195.9px;width:62.5px;height:36.5px;"></div>
<div class="btn" style="left:1848.8px;top:195.9px;width:63.0px;height:36.5px;"></div>
<span class="t fn" style="left:1783.40px;top:64.70px;font-size:14px;color:#f0f0f0;letter-spacing:-0.417px;">Cursors</span>
<span class="t fn" style="left:1854.90px;top:64.70px;font-size:14px;color:#f0f0f0;letter-spacing:0.072px;">Callout</span>
<span class="t fn" style="left:1778.60px;top:111.00px;font-size:14px;color:#f0f0f0;letter-spacing:-0.050px;">Measure</span>
<span class="t fn" style="left:1856.60px;top:111.00px;font-size:14px;color:#f0f0f0;letter-spacing:-0.338px;">Search</span>
<span class="t fn" style="left:1784.00px;top:148.40px;font-size:14px;color:#f0f0f0;letter-spacing:-0.407px;">Results</span>
<span class="t fn" style="left:1790.47px;top:164.30px;font-size:14px;color:#f0f0f0;letter-spacing:0.010px;">Table</span>
<span class="t fn" style="left:1866.00px;top:156.90px;font-size:14px;color:#f0f0f0;letter-spacing:0.537px;">Plot</span>
<span class="t fn" style="left:1854.90px;top:206.50px;font-size:14px;color:#f0f0f0;letter-spacing:0.374px;">More...</span>
<div class="sep" style="left:1773px;top:189px;width:144px;height:1px"></div>
<div class="sep" style="left:1773px;top:241px;width:144px;height:1px"></div>
<svg class="abs" style="left:1790px;top:198px" width="40" height="34" viewBox="1790 198 40 34">
<g stroke="#c8c8c8" stroke-width="2.4" fill="none">
<path d="M1796.5,203 H1819.5 M1796.5,221.6 H1819.5" stroke-dasharray="2.5 3.2 4.2 3.2 4.2 3.2 2.5"/>
<path d="M1797.7,201.8 V222.8 M1818.3,201.8 V222.8" stroke-dasharray="2.5 3 3.5 3 3.5 3 2.5"/>
</g>
<circle cx="1810" cy="210.7" r="4.1" fill="none" stroke="#c8c8c8" stroke-width="1.8"/>
<line x1="1806.6" y1="214.4" x2="1802" y2="217.2" stroke="#c8c8c8" stroke-width="2.6" stroke-linecap="round"/>
<path d="M1813.8,216.8 L1822.7,221.6 L1820.1,222.8 L1822.4,225.4 L1820.7,226.7 L1818.4,224.1 L1816.7,226.2 Z" fill="#c8c8c8" stroke="#2b2b2c" stroke-width="1.2" paint-order="stroke"/>
</svg>
<div class="abs" style="left:1919px;top:995px;width:1px;height:85px;background:#c6c6c6"></div>
<div class="badge" style="left:3px;top:999px;width:90px;height:79px"><div class="hd" style="background:#4a4622"></div><div class="sh"></div></div>
<span class="t fc" style="left:8.10px;top:1001.00px;font-size:14px;color:#f0e62e;word-spacing:-0.605px;">Ch 1</span>
<span class="t fc" style="left:10.00px;top:1024.00px;font-size:14.5px;color:#101010;letter-spacing:0.236px;-webkit-text-stroke:0.22px #101010;">500 mV/div</span>
<span class="t fc" style="left:10.80px;top:1044.00px;font-size:14.5px;color:#101010;letter-spacing:0.975px;-webkit-text-stroke:0.22px #101010;">1 MΩ</span>
<span class="t fc" style="left:10.80px;top:1062.00px;font-size:14.5px;color:#101010;letter-spacing:0.713px;-webkit-text-stroke:0.22px #101010;">1 MHz</span>
<span class="t fn" style="left:76.20px;top:1060.70px;font-size:8.5px;color:#111111;-webkit-text-stroke:0.3px #111;">B</span>
<span class="t fn" style="left:81.60px;top:1065.30px;font-size:8px;color:#111111;-webkit-text-stroke:0.3px #111;">w</span>
<div class="badge" style="left:98px;top:999px;width:90px;height:79px"><div class="hd" style="background:#1f4146"></div><div class="sh"></div></div>
<span class="t fc" style="left:103.10px;top:1001.00px;font-size:14px;color:#22cdd6;word-spacing:-0.605px;">Ch 2</span>
<span class="t fc" style="left:105.00px;top:1024.00px;font-size:14.5px;color:#101010;letter-spacing:0.236px;-webkit-text-stroke:0.22px #101010;">500 mV/div</span>
<span class="t fc" style="left:105.80px;top:1044.00px;font-size:14.5px;color:#101010;letter-spacing:0.975px;-webkit-text-stroke:0.22px #101010;">1 MΩ</span>
<span class="t fc" style="left:105.80px;top:1062.00px;font-size:14.5px;color:#101010;letter-spacing:0.713px;-webkit-text-stroke:0.22px #101010;">1 MHz</span>
<span class="t fn" style="left:171.20px;top:1060.70px;font-size:8.5px;color:#111111;-webkit-text-stroke:0.3px #111;">B</span>
<span class="t fn" style="left:176.60px;top:1065.30px;font-size:8px;color:#111111;-webkit-text-stroke:0.3px #111;">w</span>
<div class="badge" style="left:193px;top:999px;width:90px;height:79px"><div class="hd" style="background:#46262b"></div><div class="sh"></div></div>
<span class="t fc" style="left:198.10px;top:1001.00px;font-size:14px;color:#f4e9ea;word-spacing:-0.605px;">Ch 3</span>
<span class="t fc" style="left:200.00px;top:1024.00px;font-size:14.5px;color:#101010;letter-spacing:0.236px;-webkit-text-stroke:0.22px #101010;">500 mV/div</span>
<span class="t fc" style="left:200.80px;top:1044.00px;font-size:14.5px;color:#101010;letter-spacing:0.975px;-webkit-text-stroke:0.22px #101010;">1 MΩ</span>
<span class="t fc" style="left:200.80px;top:1062.00px;font-size:14.5px;color:#101010;letter-spacing:0.713px;-webkit-text-stroke:0.22px #101010;">1 MHz</span>
<span class="t fn" style="left:266.20px;top:1060.70px;font-size:8.5px;color:#111111;-webkit-text-stroke:0.3px #111;">B</span>
<span class="t fn" style="left:271.60px;top:1065.30px;font-size:8px;color:#111111;-webkit-text-stroke:0.3px #111;">w</span>
<div class="badge" style="left:288px;top:999px;width:90px;height:79px"><div class="hd" style="background:#8fd132"></div><div class="sh"></div></div>
<span class="t fc" style="left:293.10px;top:1001.00px;font-size:14px;color:#10180a;word-spacing:-0.605px;">Ch 4</span>
<span class="t fc" style="left:295.00px;top:1024.00px;font-size:14.5px;color:#101010;letter-spacing:0.236px;-webkit-text-stroke:0.22px #101010;">500 mV/div</span>
<span class="t fc" style="left:295.80px;top:1044.00px;font-size:14.5px;color:#101010;letter-spacing:0.975px;-webkit-text-stroke:0.22px #101010;">1 MΩ</span>
<span class="t fc" style="left:295.80px;top:1062.00px;font-size:14.5px;color:#101010;letter-spacing:0.713px;-webkit-text-stroke:0.22px #101010;">1 MHz</span>
<span class="t fn" style="left:361.20px;top:1060.70px;font-size:8.5px;color:#111111;-webkit-text-stroke:0.3px #111;">B</span>
<span class="t fn" style="left:366.60px;top:1065.30px;font-size:8px;color:#111111;-webkit-text-stroke:0.3px #111;">w</span>
<div class="sep" style="left:1116px;top:998px;width:1px;height:80px"></div>
<div class="sep" style="left:1267px;top:998px;width:1px;height:80px"></div>
<div class="sep" style="left:1810px;top:998px;width:1px;height:80px"></div>
<div class="btn" style="left:1127.0px;top:998.0px;width:39.7px;height:79.5px;border-radius:7px;"></div>
<div class="abs" style="left:1131.2px;top:1005.7px;width:31.2px;height:2px;background:#f7931e"></div>
<span class="t fn" style="left:1132.15px;top:1018.60px;font-size:14.5px;color:#f0f0f0;letter-spacing:0.271px;">Add</span>
<span class="t fn" style="left:1131.15px;top:1035.00px;font-size:14.5px;color:#f0f0f0;letter-spacing:-0.405px;">New</span>
<span class="t fn" style="left:1128.50px;top:1050.70px;font-size:14.5px;color:#f0f0f0;letter-spacing:0.071px;">Math</span>
<div class="btn" style="left:1172.0px;top:998.0px;width:40.0px;height:79.5px;border-radius:7px;"></div>
<div class="abs" style="left:1176.4px;top:1005.7px;width:31.2px;height:2px;background:#c9c9dc"></div>
<span class="t fn" style="left:1177.30px;top:1018.60px;font-size:14.5px;color:#f0f0f0;letter-spacing:0.271px;">Add</span>
<span class="t fn" style="left:1176.30px;top:1035.00px;font-size:14.5px;color:#f0f0f0;letter-spacing:-0.405px;">New</span>
<span class="t fn" style="left:1179.80px;top:1050.70px;font-size:14.5px;color:#f0f0f0;letter-spacing:-0.022px;">Ref</span>
<div class="btn" style="left:1217.0px;top:998.0px;width:40.0px;height:79.5px;border-radius:7px;"></div>
<div class="abs" style="left:1221.4px;top:1005.7px;width:31.2px;height:2px;background:#c964f5"></div>
<span class="t fn" style="left:1222.30px;top:1018.60px;font-size:14.5px;color:#f0f0f0;letter-spacing:0.271px;">Add</span>
<span class="t fn" style="left:1221.30px;top:1035.00px;font-size:14.5px;color:#f0f0f0;letter-spacing:-0.405px;">New</span>
<span class="t fn" style="left:1224.30px;top:1050.70px;font-size:14.5px;color:#f0f0f0;letter-spacing:-0.990px;">Bus</span>
<div class="badge" style="left:1279.0px;top:1000px;width:198.5px;height:78px;box-shadow:0 0 0 1px #0c0c0c"><div class="hd" style="background:#58595b;height:18px"></div><div class="sh" style="top:18px"></div></div>
<span class="t fn" style="left:1283.70px;top:1002.00px;font-size:14.5px;color:#f2f2f2;letter-spacing:-0.047px;">Horizontal</span>
<span class="t fc" style="left:1284.70px;top:1024.00px;font-size:14.5px;color:#101010;letter-spacing:0.047px;-webkit-text-stroke:0.22px #101010;">4 ms/div</span>
<span class="t fc" style="left:1390.30px;top:1024.00px;font-size:14.5px;color:#101010;letter-spacing:-0.084px;-webkit-text-stroke:0.22px #101010;">40 ms</span>
<span class="t fc" style="left:1284.70px;top:1043.00px;font-size:14.5px;color:#101010;letter-spacing:0.050px;-webkit-text-stroke:0.22px #101010;">SR: 2.5 MS/s</span>
<span class="t fc" style="left:1390.30px;top:1043.00px;font-size:14.5px;color:#101010;letter-spacing:0.165px;-webkit-text-stroke:0.22px #101010;">400 ns/pt</span>
<span class="t fc" style="left:1284.70px;top:1062.00px;font-size:14.5px;color:#101010;letter-spacing:0.088px;-webkit-text-stroke:0.22px #101010;">RL: 100 kpts</span>
<span class="t fc" style="left:1404.90px;top:1062.00px;font-size:14.5px;color:#101010;letter-spacing:1.101px;-webkit-text-stroke:0.22px #101010;">3%</span>
<svg class="abs" style="left:1389px;top:1060px" width="14" height="16" viewBox="1389 1060 14 16"><path d="M1391.6,1062.9 H1399.6 V1070.3 H1397.6 L1395.6,1073.6 L1393.6,1070.3 H1391.6 Z" fill="#000" stroke="#f7931e" stroke-width="1.2"/></svg>
<span class="t fnb" style="left:1392.90px;top:1064.20px;font-size:6.5px;color:#ffffff;">T</span>
<div class="badge" style="left:1484.0px;top:1000px;width:158.0px;height:78px;box-shadow:0 0 0 1px #0c0c0c"><div class="hd" style="background:#58595b;height:18px"></div><div class="sh" style="top:18px"></div></div>
<span class="t fn" style="left:1488.77px;top:1002.00px;font-size:14.5px;color:#f2f2f2;letter-spacing:-0.116px;">Trigger</span>
<span class="t fc" style="left:1489.90px;top:1024.00px;font-size:14.5px;color:#101010;letter-spacing:0.948px;-webkit-text-stroke:0.22px #101010;">Aux</span>
<span class="t fc" style="left:1578.10px;top:1024.00px;font-size:14.5px;color:#101010;letter-spacing:-0.476px;-webkit-text-stroke:0.22px #101010;">1 V</span>
<svg class="abs" style="left:1549px;top:1024px" width="20" height="14" viewBox="1549 1024 20 14"><path d="M1551.2,1036 H1556 L1562,1026.8 H1567" fill="none" stroke="#2d2d86" stroke-width="1.1"/></svg>
<div class="badge" style="left:1649.0px;top:1000px;width:148.0px;height:78px;box-shadow:0 0 0 1px #0c0c0c"><div class="hd" style="background:#58595b;height:18px"></div><div class="sh" style="top:18px"></div></div>
<span class="t fn" style="left:1653.70px;top:1002.00px;font-size:14.5px;color:#f2f2f2;letter-spacing:-0.142px;">Acquisition</span>
<span class="t fc" style="left:1655.10px;top:1024.00px;font-size:14.5px;color:#101010;letter-spacing:0.775px;-webkit-text-stroke:0.22px #101010;">Manual,</span>
<span class="t fc" style="left:1736.00px;top:1024.00px;font-size:14.5px;color:#101010;letter-spacing:0.633px;-webkit-text-stroke:0.22px #101010;">Analyze</span>
<span class="t fc" style="left:1655.10px;top:1043.00px;font-size:14.5px;color:#101010;letter-spacing:0.247px;-webkit-text-stroke:0.22px #101010;">High Res: 16 bits</span>
<span class="t fc" style="left:1655.10px;top:1062.00px;font-size:14.5px;color:#101010;letter-spacing:0.027px;-webkit-text-stroke:0.22px #101010;">Single: 1 /1</span>
<div class="abs" style="left:1821px;top:998.5px;width:89.5px;height:35px;background:#fd1e28;border:1px solid #6d6d6d;border-radius:7px"></div>
<span class="t fcb" style="left:1839.80px;top:1009.00px;font-size:12.5px;color:#ffffff;letter-spacing:-0.250px;">Stopped</span>
<div class="abs" style="left:1821px;top:1042px;width:90px;height:36px;background:#c9c9c9;border-radius:5px"></div>
<span class="t fc" style="left:1821.80px;top:1045.00px;font-size:14px;color:#101010;letter-spacing:0.529px;-webkit-text-stroke:0.22px #101010;">28 May 2025</span>
<span class="t fc" style="left:1826.30px;top:1061.30px;font-size:14px;color:#101010;letter-spacing:0.708px;-webkit-text-stroke:0.22px #101010;">7:39:11 AM</span>
</body></html>
